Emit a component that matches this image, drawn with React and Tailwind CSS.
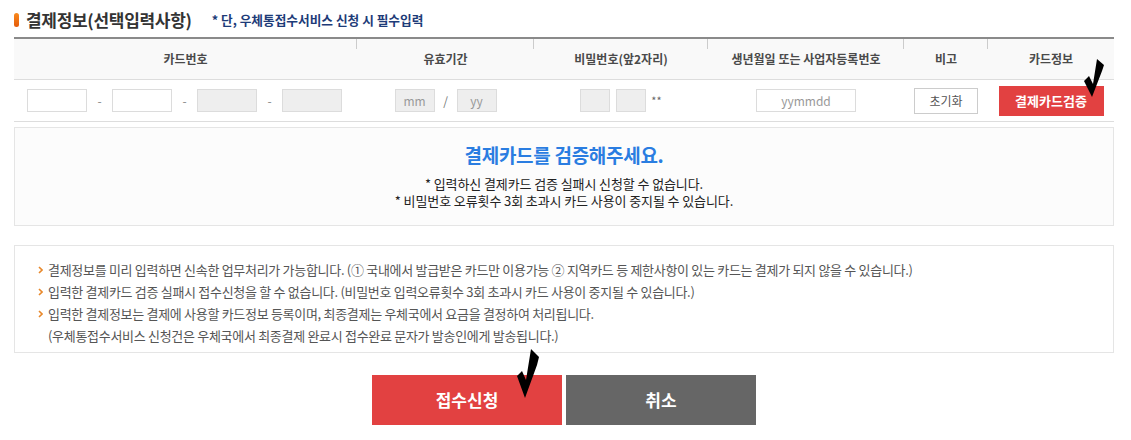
import React from "react";

const cols = "grid grid-cols-[343px_177px_174px_196px_84px_126px]";

function Mark({ className, points, w, h }) {
  return (
    <svg className={className} width={w} height={h} viewBox={`0 0 ${w} ${h}`}>
      <polygon points={points} fill="#000" />
    </svg>
  );
}

function Arrow() {
  return (
    <svg width="5" height="8" viewBox="0 0 5 8" className="mr-[5px] shrink-0">
      <path d="M1 1 L4 4 L1 7" stroke="#e8892c" strokeWidth="1.6" fill="none" />
    </svg>
  );
}

function App() {
  const headers = [
    "카드번호",
    "유효기간",
    "비밀번호(앞2자리)",
    "생년월일 또는 사업자등록번호",
    "비고",
    "카드정보",
  ];

  const box = "h-[23px] border border-[#dcdcdc] text-[12px] text-center text-[#666] placeholder:text-[#999] outline-none";

  return (
    <div className="relative w-[1131px] h-[440px] bg-white font-['Noto_Sans_CJK_KR','Noto_Sans',sans-serif] text-[#333]">
      <div className="pl-[14px] w-[1114px]">
        {/* title */}
        <div className="h-[37px] pt-[3px] flex items-center">
          <span className="w-[5px] h-[14px] rounded-full bg-gradient-to-b from-[#f98a1c] to-[#e45a0a]" />
          <h2 className="ml-[7px] text-[17px] font-bold text-[#333] tracking-[-0.3px]">
            결제정보(선택입력사항)
          </h2>
          <span className="ml-[20px] text-[12.7px] font-bold text-[#1d3b78]">
            * 단, 우체통접수서비스 신청 시 필수입력
          </span>
        </div>

        {/* table */}
        <div className="border-t-2 border-[#8a8a8a]">
          <div className={`${cols} h-[41px] bg-[#f9f9f9] border-b border-[#dddddd]`}>
            {headers.map((h, i) => (
              <div key={h} className="relative flex items-center justify-center text-[12px] font-bold text-[#4a4a4a]">
                {h}
                {i < headers.length - 1 && (
                  <span className="absolute right-0 top-0 h-[10px] w-px bg-[#cccccc]" />
                )}
              </div>
            ))}
          </div>
          <div className={`${cols} h-[42px] border-b border-[#dddddd] items-center`}>
            <div className="flex items-center justify-center pr-[2px]">
              <input className={`${box} w-[60px] bg-white`} />
              <span className="w-[25px] text-center text-[12px] text-[#888]">-</span>
              <input className={`${box} w-[60px] bg-white`} />
              <span className="w-[25px] text-center text-[12px] text-[#888]">-</span>
              <input className={`${box} w-[60px] bg-[#eeeeee]`} />
              <span className="w-[25px] text-center text-[12px] text-[#888]">-</span>
              <input className={`${box} w-[60px] bg-[#eeeeee]`} />
            </div>
            <div className="flex items-center justify-center">
              <input className={`${box} w-[40px] bg-[#eeeeee]`} placeholder="mm" />
              <span className="w-[22px] text-center text-[12px] text-[#777]">/</span>
              <input className={`${box} w-[40px] bg-[#eeeeee]`} placeholder="yy" />
            </div>
            <div className="flex items-center justify-center">
              <input className={`${box} w-[30px] bg-[#eeeeee]`} />
              <input className={`${box} w-[30px] bg-[#eeeeee] ml-[6px]`} />
              <span className="ml-[5px] text-[11px] text-[#666]">**</span>
            </div>
            <div className="flex items-center justify-center">
              <input className={`${box} w-[100px] bg-white`} placeholder="yymmdd" />
            </div>
            <div className="flex items-center justify-center">
              <button className="w-[64px] h-[26px] border border-[#cccccc] bg-white text-[12px] text-[#555]">
                초기화
              </button>
            </div>
            <div className="flex items-center justify-center">
              <button className="w-[105px] h-[30px] bg-[#e24141] text-white text-[13px] font-bold">
                결제카드검증
              </button>
            </div>
          </div>
        </div>

        {/* message */}
        <div className="mt-[5px] h-[99px] border border-[#e5e5e5] bg-[#fcfcfc] flex flex-col items-center pt-[14px]">
          <p className="text-[19px] leading-[25px] font-bold text-[#2a7de1] tracking-[-0.3px]">결제카드를 검증해주세요.</p>
          <div className="mt-[8px] text-[13px] leading-[17px] text-[#222] text-center tracking-[-0.1px]">
            <p>* 입력하신 결제카드 검증 실패시 신청할 수 없습니다.</p>
            <p>* 비밀번호 오류횟수 3회 초과시 카드 사용이 중지될 수 있습니다.</p>
          </div>
        </div>

        {/* info */}
        <div className="mt-[19px] h-[108px] border border-[#e5e5e5] pt-[13px] pl-[23px] text-[13px] leading-[22px] text-[#555] tracking-[-0.3px]">
          <div className="flex items-center">
            <Arrow />
            결제정보를 미리 입력하면 신속한 업무처리가 가능합니다. (① 국내에서 발급받은 카드만 이용가능 ② 지역카드 등 제한사항이 있는 카드는 결제가 되지 않을 수 있습니다.)
          </div>
          <div className="flex items-center">
            <Arrow />
            입력한 결제카드 검증 실패시 접수신청을 할 수 없습니다. (비밀번호 입력오류횟수 3회 초과시 카드 사용이 중지될 수 있습니다.)
          </div>
          <div className="flex items-center">
            <Arrow />
            입력한 결제정보는 결제에 사용할 카드정보 등록이며, 최종결제는 우체국에서 요금을 결정하여 처리됩니다.
          </div>
          <div className="pl-[10px]">
            (우체통접수서비스 신청건은 우체국에서 최종결제 완료시 접수완료 문자가 발송인에게 발송됩니다.)
          </div>
        </div>

        {/* buttons */}
        <div className="mt-[22px] flex justify-center gap-[4px]">
          <button className="w-[190px] h-[50px] bg-[#e24141] text-white text-[17px] font-bold">접수신청</button>
          <button className="w-[190px] h-[50px] bg-[#666666] text-white text-[17px] font-bold">취소</button>
        </div>
      </div>

      <Mark
        className="absolute left-[1084px] top-[59px]"
        w={21}
        h={39}
        points="0,22 5,17 9,25 13,0 20,6 18,12 8,38"
      />
      <Mark
        className="absolute left-[517px] top-[349px]"
        w={22}
        h={50}
        points="0,27 5,22 9,31 14,0 22,8 20,16 8,49"
      />
    </div>
  );
}

export default App;
